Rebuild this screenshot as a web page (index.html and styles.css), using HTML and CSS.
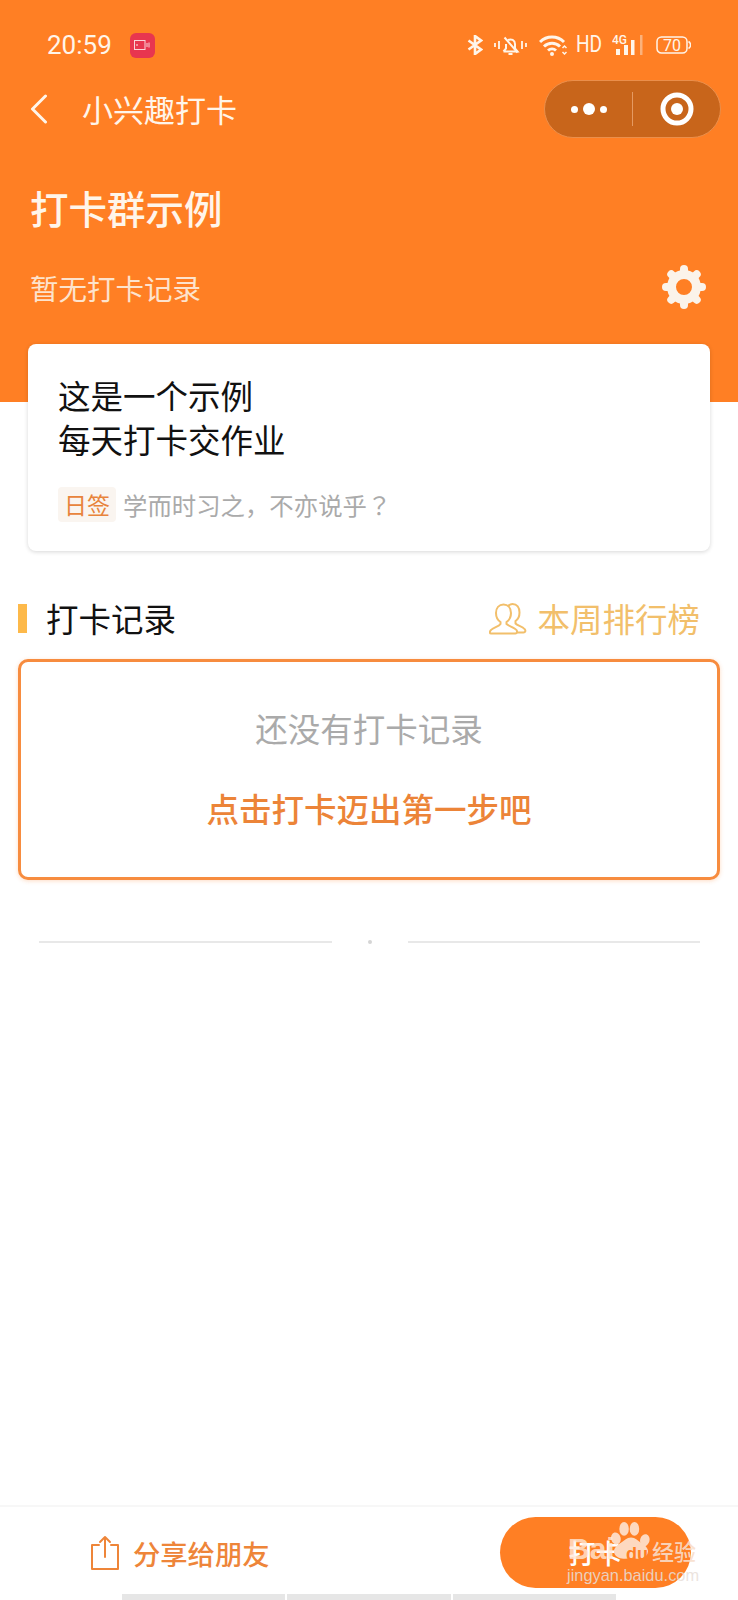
FILE: index.html
```html
<!DOCTYPE html>
<html>
<head>
  <title>打卡群示例</title>
  <link rel="stylesheet" href="styles.css">
</head>
<body>
  <div class="page">
    <div class="header">
      <div class="status-bar">
        <span class="time">20:59</span>
        <span class="rec-badge">
          <svg width="16" height="10" viewBox="0 0 16 10" fill="none" stroke="#fbd3d8" stroke-width="1">
            <rect x="0.5" y="0.5" width="10.5" height="9"/>
            <path d="M13 3v4M15 2.5v5"/>
            <circle cx="3" cy="5" r="0.5"/>
          </svg>
        </span>
        <div class="status-icons">
          <svg class="ic-bt" width="16" height="20" viewBox="0 0 16 20" fill="none" stroke="#fff5ea" stroke-width="2.600">
            <path d="M1.500 5.500 14 14.500 8 19V1l6 4.500L1.500 14.500"/>
          </svg>
          <svg class="ic-bell" width="33" height="20" viewBox="0 0 33 20" fill="none" stroke="#fff5ea" stroke-width="2">
            <path d="M1 8v4M5 6v8M28 6v8M32 8v4" stroke-width="1.800"/>
            <path d="M9.500 16.500h14l-2.500-3V9a4.500 4.500 0 0 0-7-3.800M12 9v4.500l-2.500 3"/>
            <path d="M14.500 19h4M10.500 2.500l13 15"/>
          </svg>
          <svg class="ic-wifi" width="28" height="21" viewBox="0 0 28 21" fill="none" stroke="#fff5ea" stroke-width="3">
            <path d="M1 7a17 17 0 0 1 24 0M5 11.500a11.500 11.500 0 0 1 16 0M9 15.500a6 6 0 0 1 8 0"/>
            <circle cx="13" cy="19" r="2" fill="#fff5ea" stroke="none"/>
            <path d="M23.500 13l2-2 2 2M23.500 17l2 2 2-2" stroke-width="1.500"/>
          </svg>
          <span class="ic-hd">HD</span>
          <svg class="ic-signal" width="32" height="22" viewBox="0 0 32 22">
            <text x="0" y="10" class="net-text">4G</text>
            <rect x="4" y="15" width="4" height="6" fill="#fff5ea"/>
            <rect x="12" y="11" width="4" height="10" fill="#fff5ea"/>
            <rect x="19" y="6" width="3.500" height="15" fill="#fff5ea"/>
            <rect x="28" y="1" width="2.500" height="20" fill="#fbb27c"/>
          </svg>
          <svg class="ic-battery" width="35" height="20" viewBox="0 0 35 20">
            <rect x="1" y="2" width="30" height="16" rx="4.500" fill="none" stroke="#fff5ea" stroke-width="1.500"/>
            <path d="M32.500 6.500a4 4 0 0 1 0 7" fill="none" stroke="#fff5ea" stroke-width="1.500"/>
            <text x="16" y="16" text-anchor="middle" class="batt-text">70</text>
          </svg>
        </div>
      </div>

      <div class="nav-bar">
        <svg class="back" width="18" height="30" viewBox="0 0 18 30" fill="none" stroke="#fff5ea" stroke-width="3" stroke-linecap="round" stroke-linejoin="round">
          <path d="M15.500 2 2.500 15l13 13"/>
        </svg>
        <span class="nav-title">小兴趣打卡</span>
        <div class="capsule">
          <div class="capsule-part">
            <span class="dot"></span>
            <span class="dot dot-big"></span>
            <span class="dot"></span>
          </div>
          <span class="capsule-line"></span>
          <div class="capsule-part">
            <svg width="34" height="34" viewBox="0 0 34 34">
              <circle cx="17" cy="17" r="14" fill="none" stroke="#fff" stroke-width="5"/>
              <circle cx="17" cy="17" r="6" fill="#fff"/>
            </svg>
          </div>
        </div>
      </div>

      <h1 class="group-title">打卡群示例</h1>
      <div class="group-sub">
        <span>暂无打卡记录</span>
        <svg class="gear" width="44" height="44" viewBox="-22 -22 44 44" fill="none" stroke="#fbf3ea">
          <circle r="12.500" stroke-width="9"/>
          <g stroke-width="8" stroke-linecap="round">
            <path d="M0-16v-2"/>
            <path d="M0-16v-2" transform="rotate(45)"/>
            <path d="M0-16v-2" transform="rotate(90)"/>
            <path d="M0-16v-2" transform="rotate(135)"/>
            <path d="M0-16v-2" transform="rotate(180)"/>
            <path d="M0-16v-2" transform="rotate(225)"/>
            <path d="M0-16v-2" transform="rotate(270)"/>
            <path d="M0-16v-2" transform="rotate(315)"/>
          </g>
        </svg>
      </div>
    </div>

    <div class="intro-card">
      <div class="intro-text">这是一个示例<br>每天打卡交作业</div>
      <div class="quote">
        <span class="quote-tag">日签</span>
        <span class="quote-text">学而时习之，不亦说乎<span class="quote-mark">？</span></span>
      </div>
    </div>

    <div class="section-head">
      <span class="section-bar"></span>
      <span class="section-title">打卡记录</span>
      <svg class="rank-icon" width="38" height="32" viewBox="0 0 38 32" fill="none" stroke="#f2bf6b" stroke-width="2" stroke-linejoin="round">
        <path d="M11.500 19c-3-2-4.500-5.500-4.500-9 0-5 3-8.500 7.500-8.500S22 5 22 10c0 3.500-1.500 7-4.500 9v2c2 2 8 3.500 10 6 1 1.500.5 3.500-1 3.500H2c-1.500 0-1.500-2 0-3.500 2-2.500 8-3.500 9.500-6z"/>
        <path d="M19 3c1.500-1.500 3-2 4.500-2 4.500 0 7 3.500 7 8.500 0 3.500-1.500 7-4 8.500v2.500c2 2 7 3 9 5.500 1.500 1.500 1 3.500-1 3.500H28"/>
      </svg>
      <span class="rank-text">本周排行榜</span>
    </div>

    <div class="empty-box">
      <div class="empty-tip">还没有打卡记录</div>
      <div class="empty-action">点击打卡迈出第一步吧</div>
    </div>

    <div class="divider">
      <span class="divider-line"></span>
      <span class="divider-dot"></span>
      <span class="divider-line"></span>
    </div>

    <div class="footer">
      <div class="share">
        <svg width="30" height="36" viewBox="0 0 30 36" fill="none" stroke="#ee8539" stroke-width="2" stroke-linejoin="round" stroke-linecap="round">
          <path d="M9 10H2v24h26V10h-7"/>
          <path d="M15 22V2M10 7l5-5 5 5"/>
        </svg>
        <span>分享给朋友</span>
      </div>
      <div class="checkin-btn">打卡</div>
      <div class="watermark">
        <svg class="paw" width="40" height="38" viewBox="0 0 46 44" fill="#fdd9c0">
          <ellipse cx="15" cy="8" rx="5.500" ry="8"/>
          <ellipse cx="27" cy="8" rx="5.500" ry="8"/>
          <ellipse cx="5.500" cy="19" rx="5.500" ry="7" transform="rotate(-15 5.500 19)"/>
          <ellipse cx="39" cy="21" rx="5.500" ry="7" transform="rotate(15 39 21)"/>
          <path d="M23 18c5 0 8 4 13 7 6 4 8 8 6 12-3 6-11 6-19 5-8 1-16 1-19-5-2-4 0-8 6-12 5-3 8-7 13-7z"/>
        </svg>
        <span class="wm-bai">Bai</span>
        <span class="wm-du">du</span>
        <span class="wm-jy">经验</span>
        <span class="wm-url">jingyan.baidu.com</span>
      </div>
    </div>

    <div class="home-strip">
      <span class="strip-seg"></span>
      <span class="strip-seg"></span>
      <span class="strip-seg"></span>
    </div>
  </div>
</body>
</html>
```

FILE: styles.css
```css
* {
  box-sizing: border-box;
}

body {
  margin: 0;
  background-color: #fff;
  font-family: "Noto Sans CJK SC", "Noto Sans", sans-serif;
}

.page {
  display: flex;
  flex-direction: column;
  width: 738px;
  height: 1600px;
  overflow: hidden;
}

/* orange top part */
.header {
  height: 402px;
  background-color: #ff7f24;
  color: #fff5ea;
  flex-shrink: 0;
}

.status-bar {
  display: flex;
  align-items: center;
  height: 90px;
  padding-left: 47px;
  padding-right: 47px;
}

.time {
  font-family: Roboto, sans-serif;
  font-size: 26px;
  line-height: 30px;
}

.rec-badge {
  display: flex;
  align-items: center;
  justify-content: center;
  width: 25px;
  height: 25px;
  margin-left: 18px;
  background-color: #e8364f;
  border-radius: 6px;
}

.status-icons {
  display: flex;
  align-items: center;
  margin-left: auto;
}

.ic-bell {
  margin-left: 11px;
}

.ic-wifi {
  margin-left: 12px;
}

.ic-hd {
  width: 27px;
  margin-left: 9px;
  font-family: Roboto, sans-serif;
  font-size: 23px;
  line-height: 24px;
  white-space: nowrap;
  transform: scaleX(0.83);
  transform-origin: left center;
}

.ic-signal {
  margin-left: 9px;
}

.ic-battery {
  margin-left: 12px;
}

.net-text {
  font-family: Roboto, sans-serif;
  font-size: 12px;
  font-weight: 500;
  fill: #fff5ea;
}

.batt-text {
  font-family: Roboto, sans-serif;
  font-size: 16px;
  fill: #fff5ea;
}

.nav-bar {
  display: flex;
  align-items: center;
  height: 58px;
  margin-top: -10px;
  padding-left: 30px;
  padding-right: 17px;
}

.nav-title {
  margin-left: 34px;
  font-size: 31px;
  line-height: 44px;
}

.capsule {
  display: flex;
  align-items: center;
  width: 177px;
  height: 58px;
  margin-left: auto;
  background-color: #c8651b;
  border: 1px solid #eb8f4b;
  border-radius: 29px;
}

.capsule-part {
  display: flex;
  flex: 1;
  align-items: center;
  justify-content: center;
  gap: 5px;
}

.capsule-line {
  width: 1px;
  height: 34px;
  background-color: #e59a62;
}

.dot {
  width: 7px;
  height: 7px;
  background-color: #fff;
  border-radius: 50%;
}

.dot-big {
  width: 12px;
  height: 12px;
}

.group-title {
  margin: 44px 0 0 30px;
  font-size: 38.500px;
  font-weight: 500;
  line-height: 50px;
}

.group-sub {
  display: flex;
  align-items: center;
  justify-content: space-between;
  height: 44px;
  margin-top: 33px;
  padding-left: 30px;
  padding-right: 32px;
  color: #fde3cd;
  font-size: 28.500px;
}

/* white card over the header */
.intro-card {
  flex-shrink: 0;
  height: 207px;
  margin: -58px 28px 0;
  padding: 29px 30px;
  background-color: #fff;
  border-radius: 8px;
  box-shadow: 0 1px 4px rgba(0, 0, 0, 0.16);
}

.intro-text {
  color: #111;
  font-size: 32.500px;
  line-height: 44px;
}

.quote {
  display: flex;
  align-items: center;
  margin-top: 26px;
}

.quote-tag {
  height: 35px;
  padding: 0 6px;
  background-color: #faf5f0;
  border-radius: 4px;
  color: #e8843c;
  font-size: 23px;
  line-height: 35px;
}

.quote-text {
  margin-left: 7px;
  color: #aaa;
  font-size: 24.400px;
  line-height: 33px;
}

.quote-mark {
  font-family: "Noto Sans CJK TC", sans-serif;
}

.section-head {
  display: flex;
  align-items: center;
  flex-shrink: 0;
  height: 44px;
  margin-top: 44px;
  padding-left: 18px;
  padding-right: 38px;
}

.section-bar {
  width: 9px;
  height: 29px;
  margin-top: 3px;
  background-color: #fdb94a;
}

.section-title {
  margin-left: 19px;
  color: #111;
  font-size: 32.500px;
}

.rank-icon {
  margin-left: auto;
  margin-top: 3px;
}

.rank-text {
  margin-left: 10px;
  color: #f2bf6b;
  font-size: 32.500px;
}

.empty-box {
  flex-shrink: 0;
  height: 221px;
  margin: 20px 18px 0;
  padding-top: 44px;
  background-color: #fff;
  border: 3px solid #f78c3f;
  border-radius: 10px;
  box-shadow: 0 1px 4px rgba(247, 140, 63, 0.3);
  text-align: center;
  font-size: 32.500px;
  line-height: 44px;
}

.empty-tip {
  color: #aaa;
}

.empty-action {
  margin-top: 36px;
  color: #ec8438;
  font-weight: 500;
}

.divider {
  display: flex;
  align-items: center;
  flex-shrink: 0;
  height: 2px;
  margin: 61px 38px 0 39px;
}

.divider-line {
  flex: 1;
  height: 2px;
  background-color: #e8e8e8;
}

.divider-dot {
  width: 4px;
  height: 4px;
  margin: 0 36px;
  background-color: #d5d5d5;
  border-radius: 50%;
}

/* bottom bar */
.footer {
  position: relative;
  display: flex;
  align-items: flex-start;
  justify-content: space-between;
  height: 89px;
  margin-top: auto;
  padding: 0 47px 0 90px;
  border-top: 2px solid #f7f7f7;
}

.share {
  display: flex;
  align-items: center;
  gap: 13px;
  margin-top: 26px;
  color: #ee8539;
  font-size: 27.300px;
  font-weight: 500;
}

.checkin-btn {
  width: 191px;
  height: 71px;
  margin-top: 10px;
  background-color: #ff7f24;
  border-radius: 36px;
  color: #fff;
  font-size: 27px;
  font-weight: 500;
  line-height: 71px;
  text-align: center;
}

.watermark {
  position: absolute;
  left: 566px;
  top: 0;
  width: 140px;
  height: 85px;
}

.paw {
  position: absolute;
  left: 45px;
  top: 15px;
}

.wm-bai {
  position: absolute;
  left: 2px;
  top: 24px;
  color: rgba(255, 232, 216, 0.8);
  font-family: "Liberation Sans", sans-serif;
  font-size: 30px;
  font-weight: 700;
  line-height: 36px;
}

.wm-du {
  position: absolute;
  left: 60px;
  top: 36px;
  color: #ff7f24;
  font-family: "Liberation Sans", sans-serif;
  font-size: 18px;
  font-weight: 700;
  line-height: 22px;
}

.wm-jy {
  position: absolute;
  left: 86px;
  top: 27px;
  color: rgba(248, 222, 204, 0.9);
  font-size: 22px;
  font-weight: 500;
  line-height: 32px;
}

.wm-url {
  position: absolute;
  left: 1px;
  top: 57px;
  color: rgba(232, 222, 216, 0.85);
  font-family: "Liberation Sans", sans-serif;
  font-size: 16.400px;
  line-height: 22px;
  white-space: nowrap;
}

.home-strip {
  display: flex;
  flex-shrink: 0;
  gap: 2px;
  height: 6px;
  padding-left: 122px;
  padding-right: 122px;
}

.strip-seg {
  flex: 1;
  background-color: #e6e6e6;
}
```
